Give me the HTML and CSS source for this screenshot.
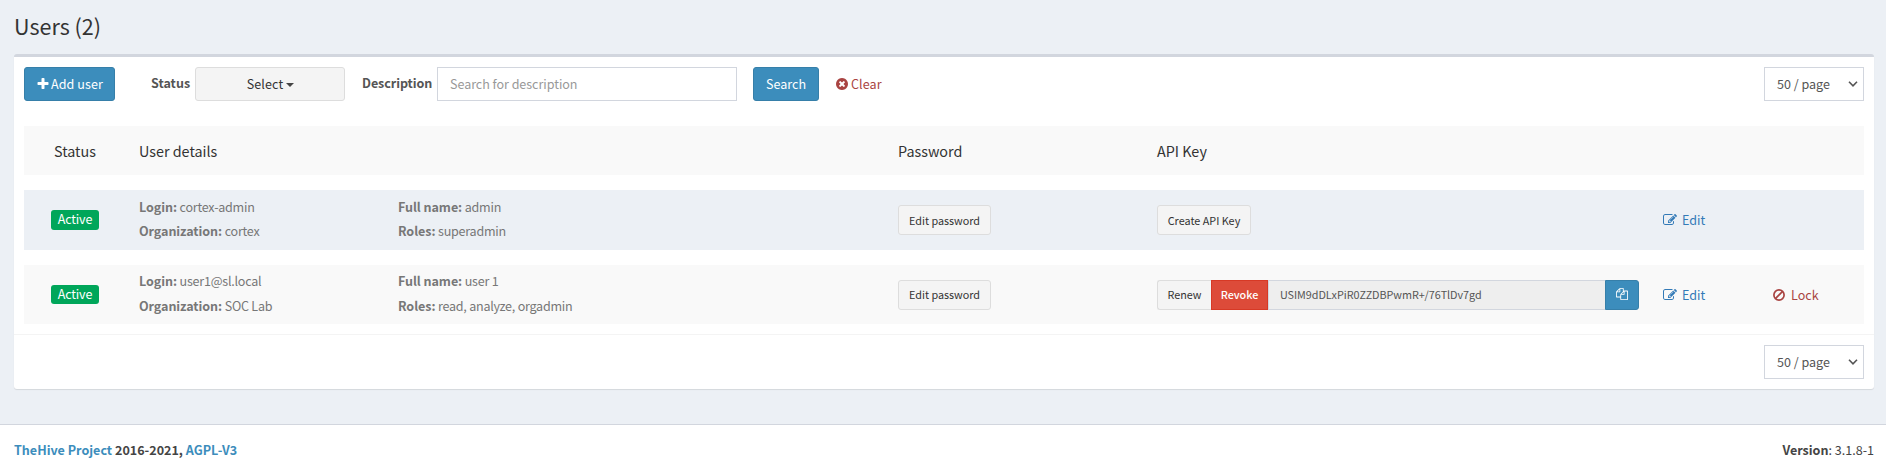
FILE: index.html
```html
<!DOCTYPE html>
<html lang="en">
<head>
<meta charset="utf-8">
<title>Users</title>
<link rel="stylesheet" href="styles.css">
</head>
<body>
<svg width="0" height="0" class="sprite" aria-hidden="true">
  <symbol id="plus" viewBox="0 0 1792 1792"><path d="M1600 736v192q0 40-28 68t-68 28h-416v416q0 40-28 68t-68 28h-192q-40 0-68-28t-28-68v-416h-416q-40 0-68-28t-28-68v-192q0-40 28-68t68-28h416v-416q0-40 28-68t68-28h192q40 0 68 28t28 68v416h416q40 0 68 28t28 68z"/></symbol>
  <symbol id="times-circle" viewBox="0 0 1792 1792"><path d="M1277 1122q0-26-19-45l-181-181 181-181q19-19 19-45 0-27-19-46l-90-90q-19-19-46-19-26 0-45 19l-181 181-181-181q-19-19-45-19-27 0-46 19l-90 90q-19 19-19 46 0 26 19 45l181 181-181 181q-19 19-19 45 0 27 19 46l90 90q19 19 46 19 26 0 45-19l181-181 181 181q19 19 45 19 27 0 46-19l90-90q19-19 19-46zm387-226q0 209-103 385.5t-279.5 279.5-385.5 103-385.5-103-279.5-279.5-103-385.5 103-385.5 279.5-279.5 385.5-103 385.5 103 279.5 279.5 103 385.5z"/></symbol>
  <symbol id="edit" viewBox="0 0 1792 1792"><path d="M888 1184l116-116-152-152-116 116v56h96v96h56zm440-720q-16-16-33 1l-350 350q-17 17-1 33t33-1l350-350q17-17 1-33zm80 594v190q0 119-84.5 203.5t-203.5 84.5h-832q-119 0-203.5-84.5t-84.5-203.5v-832q0-119 84.5-203.5t203.5-84.5h832q63 0 117 25 15 7 18 23 3 17-9 29l-49 49q-14 14-32 8-23-6-45-6h-832q-66 0-113 47t-47 113v832q0 66 47 113t113 47h832q66 0 113-47t47-113v-126q0-13 9-22l64-64q15-15 35-7t20 29zm-96-738l288 288-672 672h-288v-288zm444 132l-92 92-288-288 92-92q28-28 68-28t68 28l152 152q28 28 28 68t-28 68z"/></symbol>
  <symbol id="files" viewBox="0 0 1792 1792"><path d="M1696 384q40 0 68 28t28 68v1216q0 40-28 68t-68 28h-960q-40 0-68-28t-28-68v-288h-544q-40 0-68-28t-28-68v-672q0-40 20-88t48-76l408-408q28-28 76-48t88-20h416q40 0 68 28t28 68v328q68-40 128-40h416zm-544 213l-299 299h299v-299zm-640-384l-299 299h299v-299zm196 647l316-316v-416h-384v416q0 40-28 68t-68 28h-416v640h512v-256q0-40 20-88t48-76zm956 804v-1152h-384v416q0 40-28 68t-68 28h-416v640h896z"/></symbol>
  <symbol id="ban" viewBox="0 0 14 14"><g fill="none" stroke="currentColor" stroke-width="1.7"><circle cx="7" cy="7" r="5.1"/><path d="M3.4 10.6l7.2-7.2"/></g></symbol>
  <symbol id="chevron" viewBox="0 0 10 6"><path d="M1 .8l4 4 4-4" fill="none" stroke="currentColor" stroke-width="1.6"/></symbol>
</svg>

<main class="content">
  <h1 class="title">Users (2)</h1>
  <section class="box">
    <div class="toolbar">
      <button class="btn primary add"><svg class="icon"><use href="#plus"/></svg>Add user</button>
      <span class="label status-label">Status</span>
      <button class="btn dropdown">Select<i class="caret"></i></button>
      <span class="label desc-label">Description</span>
      <div class="input">Search for description</div>
      <button class="btn primary search">Search</button>
      <a class="clear"><svg class="icon"><use href="#times-circle"/></svg>Clear</a>
      <div class="page-size">50 / page<svg class="chevron"><use href="#chevron"/></svg></div>
    </div>

    <div class="row head">
      <span class="center">Status</span><span>User details</span><span></span><span>Password</span><span>API Key</span>
    </div>

    <div class="row user current">
      <span class="center"><span class="badge">Active</span></span>
      <div class="info"><p><b>Login:</b> cortex-admin</p><p><b>Organization:</b> cortex</p></div>
      <div class="info"><p><b>Full name:</b> admin</p><p><b>Roles:</b> superadmin</p></div>
      <div><button class="btn small pwd">Edit password</button></div>
      <div><button class="btn small create">Create API Key</button></div>
      <a class="edit"><svg class="icon"><use href="#edit"/></svg>Edit</a>
    </div>

    <div class="row user second">
      <span class="center"><span class="badge">Active</span></span>
      <div class="info"><p><b>Login:</b> user1@sl.local</p><p><b>Organization:</b> SOC Lab</p></div>
      <div class="info"><p><b>Full name:</b> user 1</p><p><b>Roles:</b> read, analyze, orgadmin</p></div>
      <div><button class="btn small pwd">Edit password</button></div>
      <div class="key-group">
        <button class="btn small renew">Renew</button><button class="btn small revoke">Revoke</button>
        <div class="key">USIM9dDLxPiR0ZZDBPwmR+/76TlDv7gd</div>
        <button class="btn small primary copy"><svg class="files"><use href="#files"/></svg></button>
      </div>
      <a class="edit"><svg class="icon"><use href="#edit"/></svg>Edit</a>
      <a class="lock"><svg class="icon"><use href="#ban"/></svg>Lock</a>
    </div>

    <div class="box-footer">
      <div class="page-size">50 / page<svg class="chevron"><use href="#chevron"/></svg></div>
    </div>
  </section>
</main>

<footer class="footer">
  <div class="legal"><a>TheHive Project</a> 2016-2021, <a>AGPL-V3</a></div>
  <div><b>Version</b>: 3.1.8-1</div>
</footer>
</body>
</html>
```
FILE: styles.css
```css
* { box-sizing: border-box; }

body {
  margin: 0;
  height: 470px;
  display: flex;
  flex-direction: column;
  overflow: hidden;
  background: #ecf0f5;
  color: #333;
  font: 12.55px/20px "Noto Sans CJK SC", "Noto Sans", sans-serif;
}

.sprite { display: none; }
.icon { width: 14px; height: 14px; fill: currentColor; flex: none; }

.content { height: 424px; flex: none; padding: 0 12px 0 14px; }

.title {
  margin: 0;
  height: 54px;
  padding-top: 13px;
  font-size: 21.5px;
  line-height: 26px;
  font-weight: 400;
}

.box {
  height: 335px;
  background: #fff;
  border-top: 3px solid #d2d6de;
  border-radius: 3px;
  box-shadow: 0 1px 1px rgba(0, 0, 0, .1);
}

.toolbar { display: flex; padding: 10px 10px 0 10px; height: 69px; }

.btn {
  display: flex;
  align-items: center;
  justify-content: center;
  height: 34px;
  padding: 0;
  border: 1px solid #ddd;
  border-radius: 3px;
  background: #f4f4f4;
  color: #333;
  font: inherit;
  white-space: nowrap;
}
.primary { background: #3c8dbc; border-color: #367fa9; color: #fff; }
.add { width: 91px; gap: 1px; letter-spacing: .1px; }
.label { color: #555; font-weight: 700; line-height: 32px; }
.status-label { margin-left: 36px; width: 44px; }
.dropdown { width: 150px; letter-spacing: .1px; padding-left: 1px; }
.caret {
  margin: 2px 0 0 3px;
  border: 4px solid transparent;
  border-top-color: #444;
  border-bottom: 0;
}
.desc-label { margin-left: 17px; width: 75px; letter-spacing: -.08px; }
.input {
  width: 300px;
  height: 34px;
  padding: 0 12px;
  border: 1px solid #d2d6de;
  color: #999;
  line-height: 31px;
  letter-spacing: -.04px;
}
.search { width: 66px; margin-left: 16px; }
.clear { display: flex; align-items: center; height: 34px; margin-left: 16px; color: #a94442; gap: 2px; letter-spacing: .1px; }
.page-size {
  display: flex;
  align-items: center;
  justify-content: space-between;
  width: 100px;
  height: 34px;
  margin-left: auto;
  padding: 0 5px 0 12px;
  border: 1px solid #d2d6de;
  background: #fff;
  color: #555;
}
.chevron { width: 10px; height: 6px; }

.row {
  display: grid;
  grid-template-columns: 115px 259px 500px 259px 506px 109px 1fr;
  align-items: center;
  margin: 0 10px 15px 10px;
  background: #f9f9f9;
}
.center { width: 102px; display: flex; justify-content: center; }
.head { height: 49px; font-size: 14.35px; }
.user { height: 60px; color: #777; }
.current { background: #ecf0f5; }
.second { height: 59px; margin-bottom: 10px; }
.badge {
  width: 48px;
  height: 20px;
  border-radius: 3px;
  background: #00a65a;
  color: #fff;
  text-align: center;
  line-height: 18px;
  letter-spacing: -.2px;
}
.second .badge { height: 19px; }
.info { padding-bottom: 2px; letter-spacing: -.24px; }
.info b { letter-spacing: -.06px; }
.info p { margin: 0; height: 24px; line-height: 24px; }
.second .info p:first-child { height: 25px; }

.small { height: 30px; font-size: 10.8px; }
.second .small { padding-bottom: 1px; }
.pwd { width: 93px; }
.create { width: 94px; }
.key-group { display: flex; width: 482px; }
.renew { width: 54px; border-right: 0; border-radius: 3px 0 0 3px; }
.revoke { width: 57px; background: #dd4b39; border-color: #d73925; border-radius: 0; color: #fff; font-weight: 500; }
.key {
  flex: 1;
  height: 30px;
  padding: 0 11px;
  border: 1px solid #d2d6de;
  border-right: 0;
  background: #eee;
  color: #555;
  font-size: 10.8px;
  line-height: 27px;
  letter-spacing: -.05px;
}
.copy { width: 34px; border-radius: 0 3px 3px 0; }
.files { width: 12px; height: 12px; fill: #fff; }
.edit, .lock { display: flex; align-items: center; gap: 5px; color: #337ab7; }
.lock { color: #a94442; }

.box-footer { padding: 10px; border-top: 1px solid #f4f4f4; }

.footer {
  flex: 1;
  display: flex;
  justify-content: space-between;
  padding: 15px 12px 0 14px;
  border-top: 1px solid #d2d6de;
  background: #fff;
  color: #444;
}
.legal { font-weight: 700; }
.legal a { color: #3c8dbc; }
```
